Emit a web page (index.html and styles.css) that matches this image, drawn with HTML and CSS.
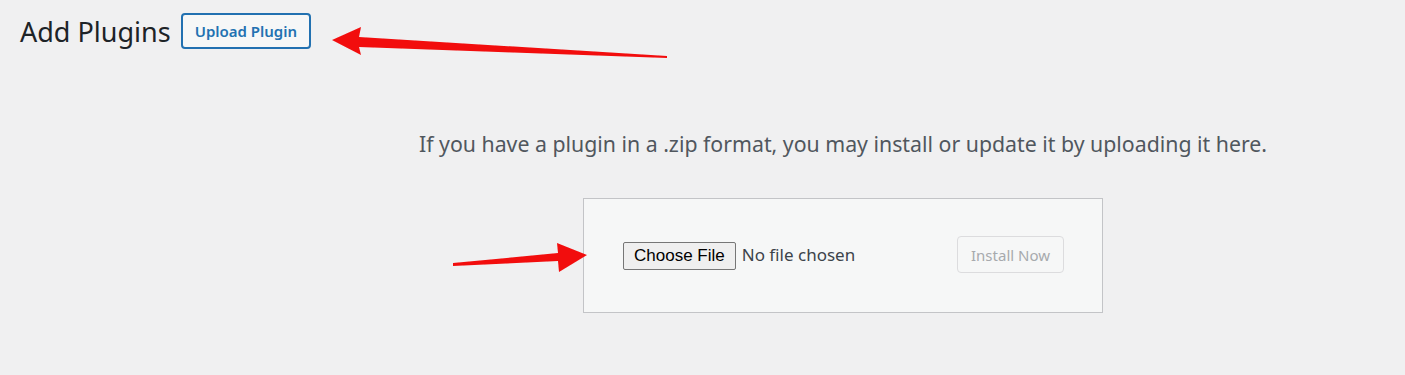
FILE: index.html
```html
<!DOCTYPE html>
<html lang="en">
<head>
  <meta charset="UTF-8" />
  <title>Add Plugins</title>
  <link rel="stylesheet" href="styles.css">
</head>
<body>

  <div class="wrap">
    <div class="page-head">
      <h1>Add Plugins</h1>
      <a class="title-action" href="#">Upload Plugin</a>
    </div>

    <div class="upload-plugin">
      <p class="install-help">If you have a plugin in a .zip format, you may install or update it by uploading it here.</p>
      <form class="upload-form">
        <input type="file" class="file-input">
        <button type="button" class="install-btn" disabled>Install Now</button>
      </form>
    </div>
  </div>

  <!-- annotation arrows -->
  <svg class="arrows" width="1405" height="375" viewBox="0 0 1405 375">
    <defs>
      <filter id="soft" x="-10%" y="-50%" width="120%" height="200%">
        <feGaussianBlur stdDeviation="0.6"/>
      </filter>
    </defs>
    <g fill="#f20d0d" filter="url(#soft)">
      <polygon points="332,40 361,27 359,37 667,56 667,58 359,47 361,55"/>
      <polygon points="587,255 557,243 558,253 453,263 453,266 558,261 559,272"/>
    </g>
  </svg>

</body>
</html>
```

FILE: styles.css
```css
body, html {
  margin: 0;
  padding: 0;
  height: 100%;
  background: #f0f0f1;
  font-family: 'Noto Sans', 'Open Sans', sans-serif;
  color: #3c434a;
  overflow: hidden;
}

.wrap {
  padding: 12px 0 0 20px;
}

.page-head {
  display: flex;
  align-items: center;
  gap: 10px;
}

h1 {
  margin: 0;
  font-size: 27px;
  font-weight: 400;
  color: #1d2327;
  line-height: 1.3;
  padding-top: 2px;
}

.title-action {
  display: inline-block;
  box-sizing: border-box;
  height: 36px;
  padding: 0 12px;
  line-height: 32px;
  border: 2px solid #2271b1;
  border-radius: 4px;
  background: #f6f7f7;
  color: #2271b1;
  font-size: 15px;
  font-weight: 600;
  text-decoration: none;
}

.upload-plugin {
  margin-left: 261px;
  display: flex;
  flex-direction: column;
  align-items: center;
}

.install-help {
  margin: 0;
  padding: 80px 0 0;
  font-size: 21.3px;
  color: #50575e;
  text-align: center;
}

.upload-form {
  margin-top: 40px;
  box-sizing: border-box;
  width: 520px;
  height: 115px;
  padding: 0 38px 0 39px;
  display: flex;
  align-items: center;
  justify-content: space-between;
  background: #f6f7f7;
  border: 1px solid #c3c4c7;
}

.file-input {
  font-family: 'Noto Sans', 'Open Sans', sans-serif;
  font-size: 17px;
  color: #3c434a;
}

.file-input::file-selector-button {
  font-family: 'Liberation Sans', Arial, sans-serif;
  font-size: 17px;
  color: #000;
  background: #efefef;
  border: 1px solid #767676;
  border-radius: 2px;
  padding: 3px 10px;
  margin-right: 6px;
}

.install-btn {
  box-sizing: border-box;
  height: 37px;
  padding: 0 13px;
  font-family: 'Noto Sans', 'Open Sans', sans-serif;
  font-size: 15px;
  color: #a7aaad;
  background: #f6f7f7;
  border: 1px solid #dcdcde;
  border-radius: 4px;
  margin-top: -2px;
}

.arrows {
  position: absolute;
  top: 0;
  left: 0;
  pointer-events: none;
}
```
